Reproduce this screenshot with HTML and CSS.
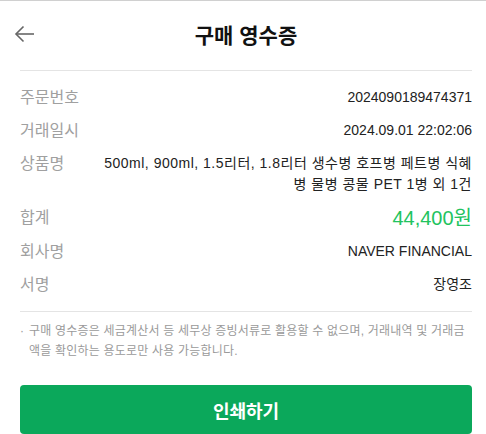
FILE: index.html
```html
<!DOCTYPE html>
<html lang="ko">
<head>
<meta charset="utf-8">
<title>구매 영수증</title>
<link rel="stylesheet" href="styles.css">
</head>
<body>
<div class="page">
  <header class="header">
    <button class="back" aria-label="뒤로">
      <svg width="22" height="18" viewBox="0 0 22 18" fill="none" stroke="#666" stroke-width="1.6">
        <path d="M20 9H2"/>
        <path d="M9.5 1.5L2 9l7.5 7.5"/>
      </svg>
    </button>
    <h1 class="title">구매 영수증</h1>
  </header>
  <dl class="list">
    <div class="row"><dt class="label">주문번호</dt><dd class="value">2024090189474371</dd></div>
    <div class="row"><dt class="label">거래일시</dt><dd class="value">2024.09.01 22:02:06</dd></div>
    <div class="row"><dt class="label">상품명</dt><dd class="value product">500ml, 900ml, 1.5리터, 1.8리터 생수병 호프병 페트병 식혜병 물병 콩물 PET 1병 외 1건</dd></div>
    <div class="row total"><dt class="label">합계</dt><dd class="value amount">44,400원</dd></div>
    <div class="row"><dt class="label">회사명</dt><dd class="value">NAVER FINANCIAL</dd></div>
    <div class="row"><dt class="label">서명</dt><dd class="value">장영조</dd></div>
  </dl>
  <p class="note">구매 영수증은 세금계산서 등 세무상 증빙서류로 활용할 수 없으며, 거래내역 및 거래금액을 확인하는 용도로만 사용 가능합니다.</p>
  <button class="print">인쇄하기</button>
</div>
</body>
</html>
```
FILE: styles.css
```css
html, body {
  margin: 0;
  padding: 0;
  background: #fff;
}
body {
  border-top: 1px solid #d0d0d0;
  font-family: "Liberation Sans", "Noto Sans CJK KR", sans-serif;
  color: #222;
}
.page {
  padding: 0 14px 0 20px;
}
.header {
  position: relative;
  height: 69px;
  display: flex;
  align-items: center;
  justify-content: center;
  border-bottom: 1px solid #e4e4e4;
}
.back {
  position: absolute;
  left: -6px;
  top: 24px;
  width: 22px;
  height: 18px;
  padding: 0;
  border: 0;
  background: none;
  display: flex;
}
.title {
  margin: 0;
  font-size: 21px;
  font-weight: 700;
  color: #111;
  line-height: 26px;
}
.list {
  margin: 0;
  padding: 16px 0 16px;
  display: flex;
  flex-direction: column;
  gap: 12px;
  border-bottom: 1px solid #e4e4e4;
}
.row {
  display: flex;
  justify-content: space-between;
  align-items: flex-start;
  gap: 13px;
}
.label {
  flex: none;
  min-width: 70px;
  font-size: 16px;
  line-height: 21px;
  color: #a0a0a0;
}
.value {
  margin: 0;
  font-size: 14px;
  line-height: 21px;
  text-align: right;
  color: #222;
}
.product {
  letter-spacing: 0.5px;
}
.total .label,
.total .value {
  line-height: 22px;
}
.amount {
  font-size: 20px;
  color: #22c35e;
}
.note {
  margin: 9px 0 0;
  padding-left: 9px;
  position: relative;
  font-size: 12px;
  line-height: 20px;
  color: #9a9a9a;
  letter-spacing: 0.2px;
}
.note::before {
  content: "·";
  position: absolute;
  left: 0;
  top: 0;
}
.print {
  display: block;
  width: 100%;
  margin-top: 24px;
  height: 49px;
  border: 0;
  border-radius: 4px;
  background: #0ba85b;
  color: #fff;
  font-family: "Noto Sans CJK KR", sans-serif;
  font-size: 18px;
  font-weight: 700;
}
```
